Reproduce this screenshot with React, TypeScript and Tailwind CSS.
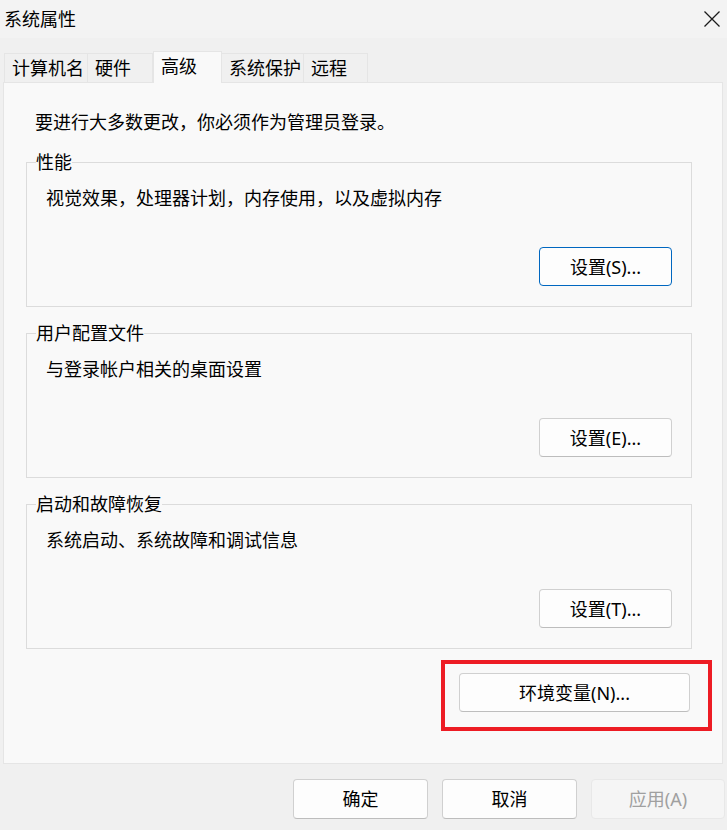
import React from 'react';

const TABS = [
  { label: '计算机名', width: 'w-[84px]' },
  { label: '硬件', width: 'w-[65px]' },
  { label: '高级', width: 'w-[69px]', active: true },
  { label: '系统保护', width: 'w-[82px]' },
  { label: '远程', width: 'w-[64px]' },
];

const GROUPS = [
  { title: '性能', desc: '视觉效果，处理器计划，内存使用，以及虚拟内存', button: '设置(S)...', focused: true },
  { title: '用户配置文件', desc: '与登录帐户相关的桌面设置', button: '设置(E)...' },
  { title: '启动和故障恢复', desc: '系统启动、系统故障和调试信息', button: '设置(T)...' },
];

function WinButton({
  children,
  className = '',
  focused = false,
  disabled = false,
}: {
  children: React.ReactNode;
  className?: string;
  focused?: boolean;
  disabled?: boolean;
}) {
  const tone = disabled
    ? 'bg-[#f5f5f5] border-[#e8e8e8] text-[#a0a0a0]'
    : focused
      ? 'bg-[#fdfdfd] border-[#0067c0] text-black'
      : 'bg-[#fdfdfd] border-[#d0d0d0] border-b-[#bdbdbd] text-black';
  return (
    <button
      className={`flex items-center justify-center rounded-[4px] border text-[18px] leading-[24px] ${tone} ${className}`}
    >
      {children}
    </button>
  );
}

export default function App() {
  return (
    <div
      className="w-[727px] h-[830px] bg-[#f0f0f0] text-black flex flex-col overflow-hidden"
      style={{ fontFamily: '"Noto Sans", "Noto Sans CJK SC", sans-serif' }}
    >
      {/* Title bar */}
      <div className="h-[38px] bg-[#f3f3f3] flex items-center justify-between pl-[4px] pr-[7px]">
        <span className="text-[18px] leading-[24px]">系统属性</span>
        <svg width="16" height="16" viewBox="0 0 16 16" className="text-[#1b1b1b]">
          <path d="M0.5 0.5 L15.5 15.5 M15.5 0.5 L0.5 15.5" stroke="currentColor" strokeWidth="1.3" fill="none" />
        </svg>
      </div>

      {/* Tabs */}
      <div className="relative z-10 flex items-end h-[45px] pl-[4px] -mb-[1px]">
        {TABS.map((t) =>
          t.active ? (
            <div
              key={t.label}
              className={`${t.width} h-[32px] bg-[#f9f9f9] border border-b-0 border-[#e5e5e5] pl-[7px] whitespace-nowrap text-[18px] leading-[28px]`}
            >
              {t.label}
            </div>
          ) : (
            <div
              key={t.label}
              className={`${t.width} h-[30px] bg-[#f0f0f0] border border-[#e5e5e5] border-l-0 first:border-l pl-[7px] whitespace-nowrap overflow-hidden text-[18px] leading-[29px]`}
            >
              {t.label}
            </div>
          ),
        )}
      </div>

      {/* Panel */}
      <div className="ml-[3px] w-[720px] h-[682px] bg-[#f9f9f9] border border-[#e5e5e5] flex flex-col">
        <p className="pl-[31px] pt-[27px] text-[18px] leading-[24px]">要进行大多数更改，你必须作为管理员登录。</p>

        <div className="mt-[16px] flex flex-col gap-[2px] pl-[22px]">
          {GROUPS.map((g) => (
            <fieldset key={g.title} className="w-[666px] h-[157px] border border-[#dcdcdc] pl-[19px] pr-[19px] mb-[12px]">
              <legend className="-ml-[10px] px-0 text-[18px] leading-[24px]">{g.title}</legend>
              <p className="mt-[12px] text-[18px] leading-[24px]">{g.desc}</p>
              <div className="mt-[37px] flex justify-end">
                <WinButton focused={g.focused} className="w-[133px] h-[39px]">
                  {g.button}
                </WinButton>
              </div>
            </fieldset>
          ))}
        </div>

        <div className="-mt-[1px] flex justify-end pr-[10px]">
          <div className="border-4 border-[#ed1c24] pt-[9px] pb-[15px] pl-[14px] pr-[18px]">
            <WinButton className="w-[231px] h-[39px]">环境变量(N)...</WinButton>
          </div>
        </div>
      </div>

      {/* Bottom buttons */}
      <div className="mt-[15px] flex justify-end gap-[14px] pr-[2px]">
        <WinButton className="w-[135px] h-[40px]">确定</WinButton>
        <WinButton className="w-[135px] h-[40px]">取消</WinButton>
        <WinButton disabled className="w-[134px] h-[40px]">应用(A)</WinButton>
      </div>
    </div>
  );
}
